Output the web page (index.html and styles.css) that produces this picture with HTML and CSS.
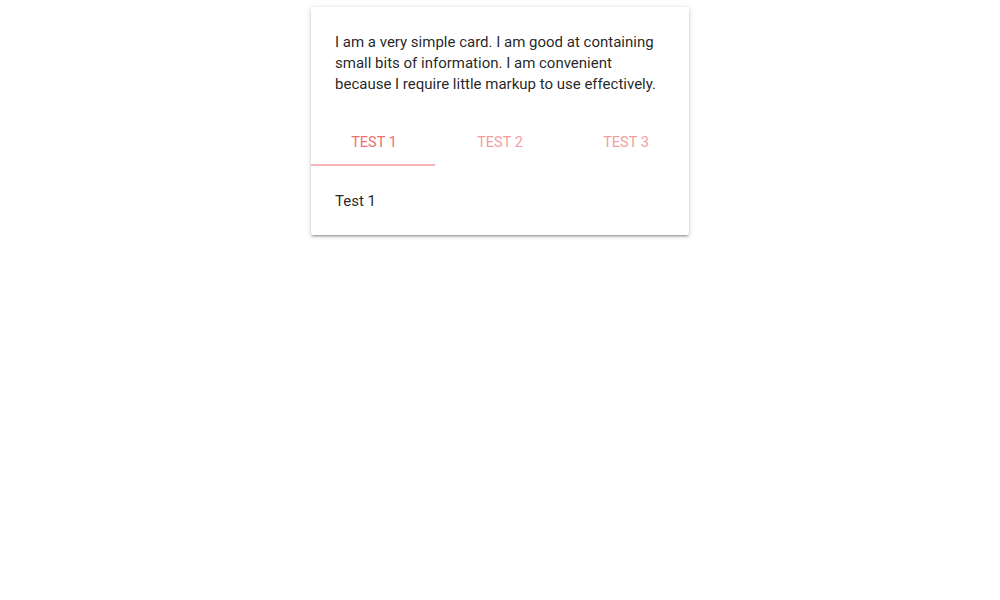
FILE: index.html
```html
<!DOCTYPE html>
<html>
<head>
<meta charset="utf-8">
<link rel="stylesheet" href="styles.css">
</head>
<body>
<div class="wrap">
  <div class="card">
    <div class="card-content">
      <p>I am a very simple card. I am good at containing small bits of information. I am convenient because I require little markup to use effectively.</p>
    </div>
    <div class="card-tabs">
      <div class="tab active">Test 1</div>
      <div class="tab">Test 2</div>
      <div class="tab">Test 3</div>
      <div class="indicator"></div>
    </div>
    <div class="card-content">Test 1</div>
  </div>
</div>
</body>
</html>
```
FILE: styles.css
```css
html, body {
  margin: 0;
  padding: 0;
  background: #fff;
}
body {
  font-family: Roboto, "Liberation Sans", sans-serif;
  font-size: 15px;
  line-height: 21px;
  color: rgba(0,0,0,0.87);
}
.wrap {
  display: flex;
  justify-content: center;
  padding: 7px 0 16px;
}
.card {
  width: 378px;
  background: #fff;
  border-radius: 2px;
  box-shadow: 0 2px 2px 0 rgba(0,0,0,0.14), 0 3px 1px -2px rgba(0,0,0,0.12), 0 1px 5px 0 rgba(0,0,0,0.2);
}
.card-content {
  padding: 25px 24px 23px;
}
.card-content p {
  margin: 0;
}
.card-tabs {
  position: relative;
  display: flex;
  height: 48px;
}
.tab {
  flex: 1;
  display: flex;
  align-items: center;
  justify-content: center;
  text-transform: uppercase;
  font-size: 14.5px;
  color: rgba(238,110,115,0.7);
}
.tab.active {
  color: #ee6e73;
}
.indicator {
  position: absolute;
  left: 0;
  bottom: 0;
  width: 124px;
  height: 2px;
  background: #f6b2b5;
}
```
